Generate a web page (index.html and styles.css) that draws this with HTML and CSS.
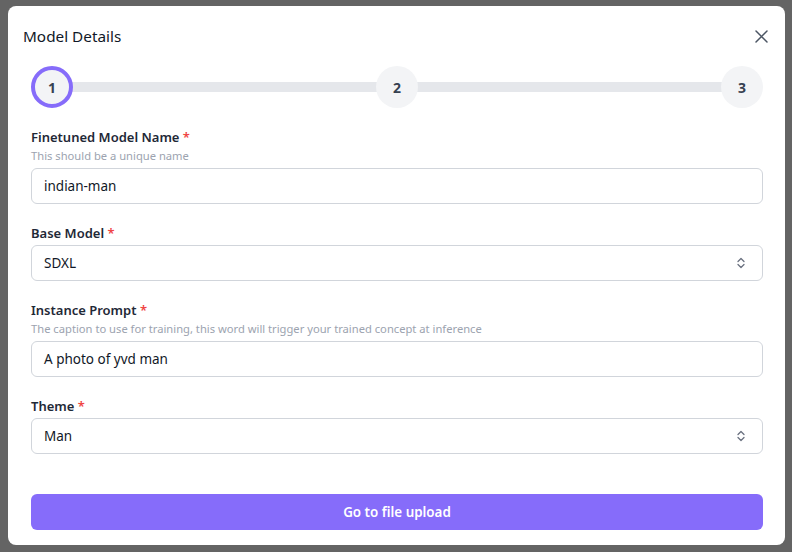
FILE: index.html
```html
<!DOCTYPE html>
<html lang="en">
<head>
<meta charset="utf-8">
<title>Model Details</title>
<link rel="stylesheet" href="styles.css">
</head>
<body>
<div class="backdrop">
  <div class="modal">
    <div class="modal-header">
      <h2 class="modal-title">Model Details</h2>
      <button class="close-btn" aria-label="Close">
        <svg width="13" height="13" viewBox="0 0 13 13"><path d="M1 1L12 12M12 1L1 12" stroke="#4b5563" stroke-width="1.5" fill="none" stroke-linecap="round"/></svg>
      </button>
    </div>
    <div class="modal-body">
      <div class="stepper">
        <div class="track"></div>
        <div class="step active">1</div>
        <div class="step">2</div>
        <div class="step">3</div>
      </div>
      <form class="form">
        <div class="field">
          <label class="label">Finetuned Model Name <span class="req">*</span></label>
          <div class="help">This should be a unique name</div>
          <div class="input">indian-man</div>
        </div>
        <div class="field">
          <label class="label">Base Model <span class="req">*</span></label>
          <div class="input select">SDXL
            <svg class="chev" width="10" height="12" viewBox="0 0 10 12"><path d="M2 4.5L5 1.5L8 4.5M2 7.5L5 10.5L8 7.5" stroke="#6b7280" stroke-width="1.3" fill="none" stroke-linecap="round" stroke-linejoin="round"/></svg>
          </div>
        </div>
        <div class="field">
          <label class="label">Instance Prompt <span class="req">*</span></label>
          <div class="help">The caption to use for training, this word will trigger your trained concept at inference</div>
          <div class="input">A photo of yvd man</div>
        </div>
        <div class="field">
          <label class="label">Theme <span class="req">*</span></label>
          <div class="input select">Man
            <svg class="chev" width="10" height="12" viewBox="0 0 10 12"><path d="M2 4.5L5 1.5L8 4.5M2 7.5L5 10.5L8 7.5" stroke="#6b7280" stroke-width="1.3" fill="none" stroke-linecap="round" stroke-linejoin="round"/></svg>
          </div>
        </div>
        <button type="button" class="submit">Go to file upload</button>
      </form>
    </div>
  </div>
</div>
</body>
</html>
```

FILE: styles.css
```css
* { box-sizing: border-box; }
html, body { margin: 0; padding: 0; }
body {
  background: #646464;
  font-family: "Noto Sans", "Open Sans", sans-serif;
  color: #111827;
  width: 792px;
  height: 552px;
  overflow: hidden;
}
.backdrop {
  padding: 6px 7px 0 8px;
}
.modal {
  width: 777px;
  height: 539px;
  background: #ffffff;
  border-radius: 8px;
  padding-top: 18px;
}
.modal-header {
  display: flex;
  align-items: center;
  justify-content: space-between;
  height: 24px;
  padding: 0 17px 0 15px;
}
.modal-title {
  margin: 0;
  font-size: 15.3px;
  font-weight: 400;
  line-height: 24px;
  color: #111827;
}
.close-btn {
  border: 0;
  background: none;
  padding: 0;
  width: 13px;
  height: 13px;
  display: flex;
}
.modal-body {
  padding: 0 22px 0 23px;
}
.stepper {
  position: relative;
  margin-top: 18px;
  height: 42px;
  display: flex;
  justify-content: space-between;
  align-items: center;
}
.track {
  position: absolute;
  left: 20px;
  right: 20px;
  top: 16px;
  height: 10px;
  background: #e5e7eb;
}
.step {
  position: relative;
  width: 42px;
  height: 42px;
  border-radius: 50%;
  background: #f3f4f6;
  display: flex;
  align-items: center;
  justify-content: center;
  font-size: 14px;
  font-weight: 700;
  color: #374151;
}
.step.active {
  background: #f3f4f6;
  border: 4px solid #866cfa;
}
.form {
  margin-top: 19px;
  display: flex;
  flex-direction: column;
}
.field {
  display: flex;
  flex-direction: column;
  margin-bottom: 19px;
}
.label {
  font-size: 13px;
  font-weight: 600;
  line-height: 20px;
  color: #1f2937;
  margin-bottom: 2px;
}
.req { color: #ef4444; }
.help {
  font-size: 11.2px;
  line-height: 16px;
  color: #9ca3af;
  margin-top: -1px;
  margin-bottom: 4px;
}
.input {
  height: 36px;
  border: 1px solid #d1d5db;
  border-radius: 6px;
  padding: 0 12px;
  display: flex;
  align-items: center;
  font-size: 13.5px;
  color: #111827;
}
.select {
  justify-content: space-between;
}
.chev { margin-right: 4px; }
.submit {
  margin-top: 21px;
  height: 36px;
  border: 0;
  border-radius: 6px;
  background: #866cfa;
  color: #ffffff;
  font-family: inherit;
  font-size: 13.4px;
  font-weight: 600;
}
```
